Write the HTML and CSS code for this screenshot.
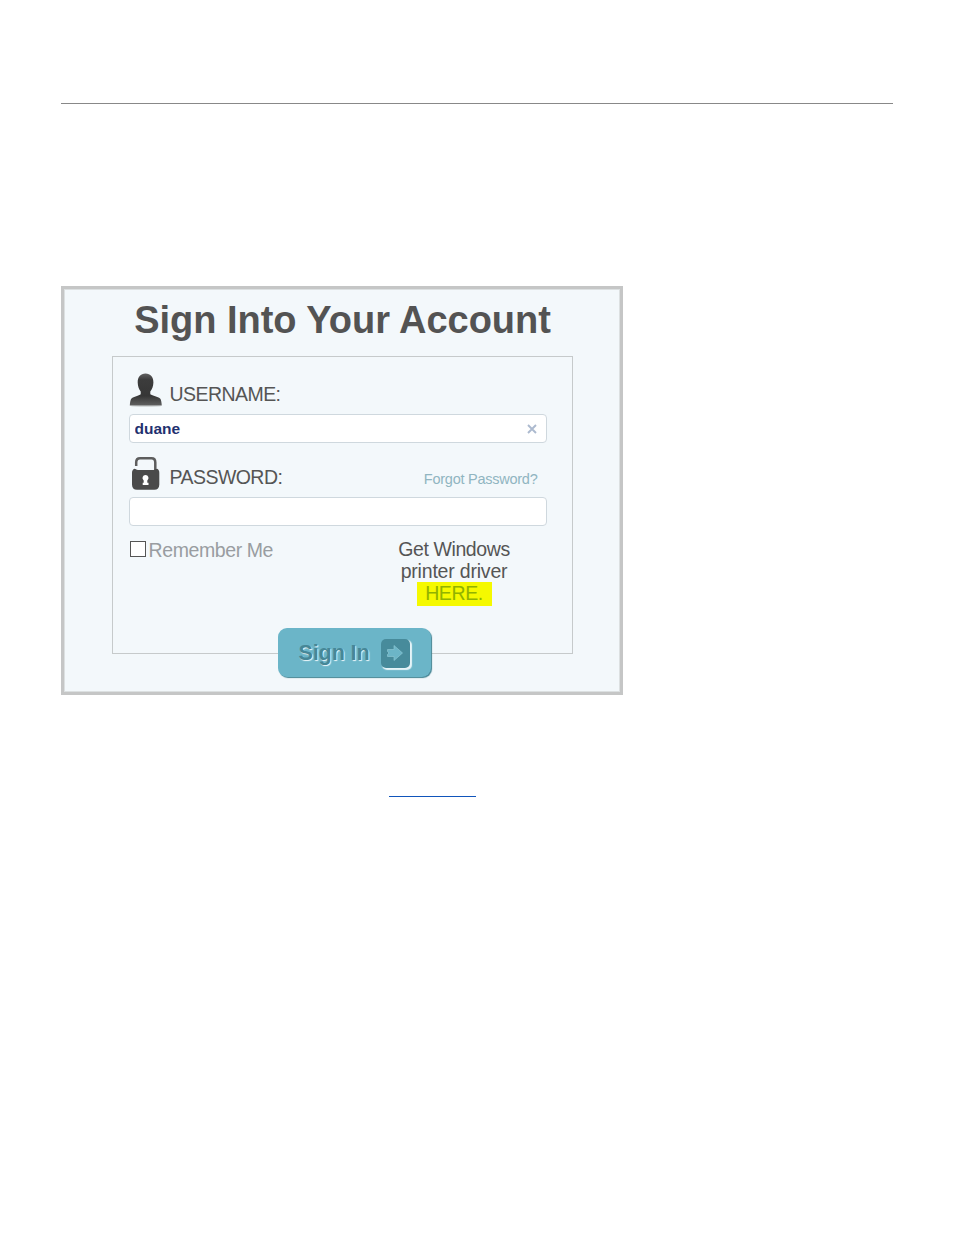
FILE: index.html
```html
<!DOCTYPE html>
<html lang="en">
<head>
    <meta charset="utf-8" />
    <meta name="viewport" content="width=device-width, initial-scale=1" />
    <title>Sign Into Your Account</title>
    <link rel="stylesheet" href="styles.css">
</head>
<body>
    <hr class="page-rule">

    <main class="login-card">
        <h1>Sign Into Your Account</h1>

        <form class="login-form">
            <div class="field-head">
                <svg class="icon" width="34" height="34" viewBox="0 0 34 34">
                    <defs>
                        <linearGradient id="dark" x1="0" y1="0" x2="0" y2="1">
                            <stop offset="0" stop-color="#606060" />
                            <stop offset="0.2" stop-color="#3c3c3c" />
                            <stop offset="0.7" stop-color="#363636" />
                            <stop offset="1" stop-color="#606060" />
                        </linearGradient>
                    </defs>
                    <ellipse cx="17" cy="33" rx="15" ry="1" fill="#d5d9da" />
                    <path fill="url(#dark)" d="M16.500 .5C11.500.5 8.600 4 8.700 9.500c.1 4 1.300 7 3 9v2.800c-1.700 1.500-7 2.200-9.200 4.200-1 1-1.500 4-1.700 7h32c-.2-3-.7-6-1.700-7-2.200-2-7.500-2.700-9.800-4.200v-2.800c1.700-2 3-5 3.100-9C24.500 4 21.500.5 16.500.5z" />
                </svg>
                <label for="username">USERNAME:</label>
            </div>
            <div class="input-box">
                <input id="username" type="text" value="duane">
                <svg class="clear" width="10" height="10" viewBox="0 0 10 10">
                    <path d="M1 1l8 8M9 1L1 9" fill="none" stroke="#acbacf" stroke-width="1.900" />
                </svg>
            </div>

            <div class="field-head password-head">
                <svg class="icon" width="34" height="34" viewBox="0 0 34 34">
                    <path d="M7.200 10V6.500c0-2.700 1.300-4.200 3.800-4.200h11.500c2.500 0 3.800 1.500 3.800 4.200V15" fill="none" stroke="#5d5d5d" stroke-width="2.500" />
                    <path fill="#4a4a4a" d="M5.500 12.800c1.200 0 1.500 1.200 3.500 1.200h15.500c2 0 2.300-1.200 3.500-1.200 1.500.6 2.300 2 2.300 4V28.500c0 3.500-1.800 5.200-5 5.200H8c-3.200 0-5-1.700-5-5.200V16.800c0-2 1-3.400 2.500-4z" />
                    <path fill="#fff" d="M16.500 19a3 3 0 0 0-1.800 5.400v2.300h-1V29h5.800v-2.300h-1.200v-2.300A3 3 0 0 0 16.500 19z" />
                </svg>
                <label for="password">PASSWORD:</label>
                <a class="forgot" href="#">Forgot Password?</a>
            </div>
            <div class="input-box">
                <input id="password" type="password">
            </div>

            <div class="options">
                <label class="remember"><input type="checkbox">Remember Me</label>
                <div class="driver">
                    Get Windows<br>
                    <span class="wide">printer driver</span><br>
                    <a href="#">HERE.</a>
                </div>
            </div>
        </form>

        <button class="sign-in" type="button">
            Sign In
            <span class="arrow">
                <svg width="18" height="18" viewBox="0 0 18 18">
                    <path fill="#6cb5c7" stroke="#8bc6d3" stroke-width="0.700" d="M1.500 5.500h6.500V1.500l8.500 7.500-8.500 7.500v-4H1.500v-2L3 9 1.500 7.500z" />
                </svg>
            </span>
        </button>
    </main>

    <a class="page-link" href="#" aria-label="Link"></a>
</body>
</html>
```
FILE: styles.css
```css
* {
    box-sizing: border-box;
}

body {
    margin: 0;
    padding: 103px 61px 0;
    background: #fff;
    color: #555;
    font-family: "Liberation Sans", Arial, sans-serif;
}

a {
    text-decoration: none;
}

.page-rule {
    height: 1px;
    margin: 0 0 182px;
    border: none;
    background: #888;
}

.login-card {
    display: flex;
    flex-direction: column;
    align-items: center;
    width: 562px;
    height: 409px;
    border: 3px solid #c5c6c6;
    box-shadow: inset 0 0 0 1px #dce0e1;
    background: #f3f8fb;
}

h1 {
    margin: 9px 0 0 1px;
    color: #535353;
    font-size: 38px;
    line-height: 44px;
    letter-spacing: -0.03px;
}

.login-form {
    width: 461px;
    height: 298px;
    margin-top: 14px;
    padding: 16px 25px 0 16px;
    border: 1px solid #c6cacb;
    font-size: 19.5px;
    letter-spacing: -0.4px;
}

.field-head {
    display: flex;
    height: 41px;
    line-height: 42px;
    letter-spacing: -0.55px;
}

.icon {
    margin-right: 7px;
}

.password-head {
    margin-top: 13px;
}

.forgot {
    margin-left: auto;
    padding-right: 9px;
    color: #90b5c1;
    font-size: 14.5px;
    line-height: 46px;
    letter-spacing: -0.25px;
}

.input-box {
    display: flex;
    align-items: center;
    width: 418px;
    height: 29px;
    padding: 0 9px 0 5px;
    border: 1px solid #cfd8de;
    border-radius: 4px;
    background: #fff;
}

.input-box input {
    flex: 1;
    padding: 0;
    border: none;
    outline: none;
    background: none;
    color: #1f316f;
    font: bold 15.5px "Liberation Sans", Arial, sans-serif;
}

.options {
    display: flex;
    justify-content: space-between;
    padding-top: 12px;
}

.remember {
    display: flex;
    height: 24px;
    color: #999da1;
    line-height: 24px;
}

.remember input {
    appearance: none;
    width: 16px;
    height: 16px;
    margin: 3px 3px 0 1px;
    border: 1px solid #555;
    background: #fff;
}

.driver {
    width: 113px;
    margin-right: 36px;
    padding-top: 1px;
    line-height: 21.5px;
    text-align: center;
    white-space: nowrap;
}

.driver .wide {
    letter-spacing: -0.2px;
}

.driver a {
    display: inline-block;
    width: 75px;
    height: 24px;
    background: #f5f900;
    color: #91b300;
    line-height: 22px;
}

.sign-in {
    display: flex;
    align-items: center;
    justify-content: space-between;
    width: 153px;
    height: 49px;
    margin: -26px 0 0 24px;
    padding: 1px 21px 0;
    border: none;
    border-radius: 9px;
    box-shadow: 1px 1px 1px #448493;
    background: #6bb5c8;
    color: #468797;
    font: bold 21.5px "Liberation Sans", Arial, sans-serif;
    letter-spacing: -0.1px;
    text-shadow: 1px 1px 1px #eef8fb;
}

.arrow {
    display: flex;
    align-items: center;
    justify-content: center;
    width: 29px;
    height: 29px;
    border-radius: 5px;
    box-shadow: 1.5px 1.5px 1px #e6f4f8;
    background: #478b9b;
}

.page-link {
    display: block;
    width: 87px;
    height: 1px;
    margin: 101px 0 0 328px;
    background: #1155bb;
}
```
